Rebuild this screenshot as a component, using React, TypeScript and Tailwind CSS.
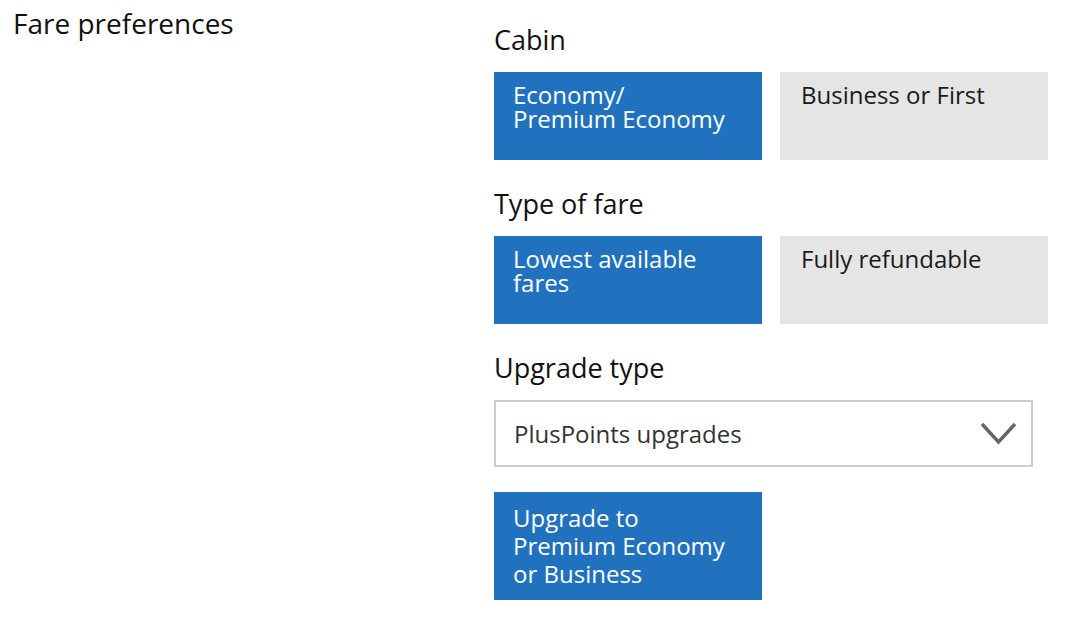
import React, { useState } from "react";

const font = { fontFamily: '"Open Sans", "Liberation Sans", sans-serif' };

function Choice({
  label,
  active,
  onClick,
}: {
  label: React.ReactNode;
  active: boolean;
  onClick: () => void;
}) {
  return (
    <button
      onClick={onClick}
      className={`w-[268px] h-[88px] text-left pr-5 pt-[11px] text-[24px] leading-[24px] flex items-start ${
        active ? "bg-[#2172be] text-white pl-[19px]" : "bg-[#e5e5e5] text-[#1a1a1a] pl-[21px]"
      }`}
    >
      <span className="block">{label}</span>
    </button>
  );
}

export default function App() {
  const [cabin, setCabin] = useState<"eco" | "biz">("eco");
  const [fare, setFare] = useState<"low" | "refund">("low");

  return (
    <div className="w-[1074px] h-[620px] bg-white flex" style={font}>
      <div className="w-[494px] pl-[13px] pt-[6px]">
        <h2 className="text-[28px] leading-[34px] text-[#111]">Fare preferences</h2>
      </div>

      <div className="flex flex-col pt-[24px]">
        <p className="text-[27px] leading-[32px] text-[#111] mb-4">Cabin</p>
        <div className="flex gap-[18px]">
          <Choice
            label={
              <>
                Economy/
                <br />
                Premium Economy
              </>
            }
            active={cabin === "eco"}
            onClick={() => setCabin("eco")}
          />
          <Choice label="Business or First" active={cabin === "biz"} onClick={() => setCabin("biz")} />
        </div>

        <p className="text-[27px] leading-[32px] text-[#111] mt-[28px] mb-4">Type of fare</p>
        <div className="flex gap-[18px]">
          <Choice
            label={
              <>
                Lowest available
                <br />
                fares
              </>
            }
            active={fare === "low"}
            onClick={() => setFare("low")}
          />
          <Choice label="Fully refundable" active={fare === "refund"} onClick={() => setFare("refund")} />
        </div>

        <p className="text-[27px] leading-[32px] text-[#111] mt-[28px] mb-4">Upgrade type</p>
        <div className="w-[539px] h-[67px] border-2 border-[#cccccc] flex items-center justify-between pl-[18px] pr-[14px]">
          <span className="text-[24px] text-[#333]">PlusPoints upgrades</span>
          <svg width="37" height="26" viewBox="0 0 37 26" fill="none">
            <path d="M2 3 L18.5 21 L35 3" stroke="#666" strokeWidth="3.5" />
          </svg>
        </div>

        <div className="mt-[25px] w-[268px] h-[108px] bg-[#2172be] text-white text-[24px] leading-[28px] pl-[19px] pr-5 pt-[12px]">
          Upgrade to
          <br />
          Premium Economy
          <br />
          or Business
        </div>
      </div>
    </div>
  );
}
